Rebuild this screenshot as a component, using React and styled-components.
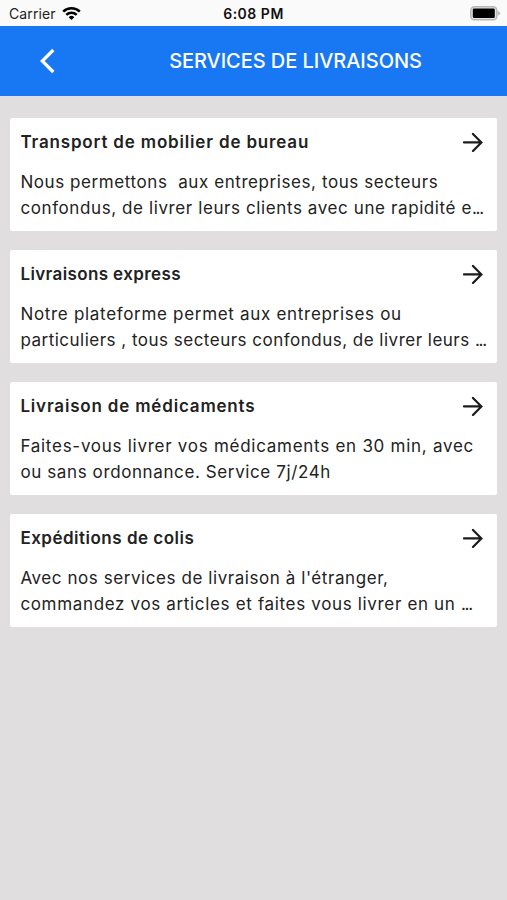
import React from 'react';
import styled, { createGlobalStyle } from 'styled-components';

const services = [
  {
    id: 1,
    title: { text: 'Transport de mobilier de bureau', spacing: 0.83 },
    lines: [
      { text: 'Nous permettons  aux entreprises, tous secteurs', spacing: 0.58 },
      { text: 'confondus, de livrer leurs clients avec une rapidité e', spacing: 0.6, cut: true },
    ],
  },
  {
    id: 2,
    title: { text: 'Livraisons express', spacing: 0.38 },
    lines: [
      { text: 'Notre plateforme permet aux entreprises ou', spacing: 0.69 },
      { text: 'particuliers , tous secteurs confondus, de livrer leurs ', spacing: 0.49, cut: true },
    ],
  },
  {
    id: 3,
    title: { text: 'Livraison de médicaments', spacing: 0.82 },
    lines: [
      { text: 'Faites-vous livrer vos médicaments en 30 min, avec', spacing: 0.73 },
      { text: 'ou sans ordonnance. Service 7j/24h', spacing: 0.61 },
    ],
  },
  {
    id: 4,
    title: { text: 'Expéditions de colis', spacing: 0.5 },
    lines: [
      { text: "Avec nos services de livraison à l'étranger,", spacing: 0.57 },
      { text: 'commandez vos articles et faites vous livrer en un ', spacing: 0.66, cut: true },
    ],
  },
];

export default function App() {
  return (
    <Screen>
      <GlobalStyle />
      <StatusBar>
        <Network>
          Carrier
          <WifiIcon />
        </Network>
        <Clock>6:08 PM</Clock>
        <Power>
          <BatteryIcon />
        </Power>
      </StatusBar>
      <Header>
        <BackButton aria-label="Retour">
          <svg width="16" height="26" viewBox="0 0 16 26" fill="none">
            <path d="M14.3 2 L3.3 13 L14.3 24" stroke="#fff" strokeWidth="3.2" />
          </svg>
        </BackButton>
        <HeaderTitle>SERVICES DE LIVRAISONS</HeaderTitle>
      </Header>
      <List>
        {services.map((service) => (
          <Card key={service.id}>
            <CardHeader>
              <CardTitle $spacing={service.title.spacing}>{service.title.text}</CardTitle>
              <ArrowIcon />
            </CardHeader>
            {service.lines.map((line) => (
              <Line key={line.text} $spacing={line.spacing}>
                {line.text}
                {line.cut && <Ellipsis>...</Ellipsis>}
              </Line>
            ))}
          </Card>
        ))}
      </List>
    </Screen>
  );
}

function WifiIcon() {
  return (
    <svg width="19" height="14" viewBox="0 0 19 14" fill="none" stroke="#000" strokeWidth="2.5">
      <path d="M1.2 4.7 A11.8 11.8 0 0 1 17.8 4.7" />
      <path d="M4.3 7.9 A7.4 7.4 0 0 1 14.7 7.9" />
      <path d="M9.5 13 L6.7 10.2 A4 4 0 0 1 12.3 10.2 Z" fill="#000" stroke="none" />
    </svg>
  );
}

function BatteryIcon() {
  return (
    <svg width="31" height="15" viewBox="0 0 31 15">
      <rect x="0.8" y="0.8" width="26" height="13" rx="3.6" fill="#e4e4e4" stroke="#b8b8b8" strokeWidth="1.5" />
      <rect x="2.8" y="2.6" width="22" height="9.4" rx="1.2" fill="#000" />
      <path d="M27.8 4.8 Q32.4 7.3 27.8 9.8 Z" fill="#b8b8b8" />
    </svg>
  );
}

function ArrowIcon() {
  return (
    <svg width="22" height="20" viewBox="0 0 22 20" fill="none" stroke="#1c1c1c" strokeWidth="2.2" strokeLinecap="round">
      <path d="M2 10.4 H19 M11 1.9 L19.4 10.4 L11 18.9" />
    </svg>
  );
}

const GlobalStyle = createGlobalStyle`
  body {
    margin: 0;
    background: #e0dedf;
    font-family: Inter, 'Liberation Sans', sans-serif;
  }
`;

const Screen = styled.div`
  min-height: 100vh;
  background: #e0dedf;
`;

const StatusBar = styled.div`
  display: grid;
  grid-template-columns: 1fr auto 1fr;
  align-items: center;
  box-sizing: border-box;
  height: 26px;
  padding: 1px 6px 0 9px;
  background: #fafafa;
  font-size: 14px;
  color: #222;
`;

const Network = styled.div`
  display: flex;
  align-items: center;
  gap: 6px;
  letter-spacing: 0.1px;
`;

const Clock = styled.span`
  margin-right: 3px;
  font-weight: 600;
  letter-spacing: 0.5px;
  color: #111;
`;

const Power = styled.div`
  display: flex;
  justify-content: flex-end;
`;

const Header = styled.header`
  display: flex;
  align-items: center;
  height: 70px;
  background: #1877f2;
`;

const BackButton = styled.button`
  display: flex;
  width: 84px;
  padding: 0 0 0 39px;
  border: 0;
  background: none;
`;

const HeaderTitle = styled.h1`
  flex: 1;
  margin: 0;
  font-size: 20px;
  font-weight: 500;
  line-height: 30px;
  letter-spacing: -0.05px;
  text-align: center;
  white-space: nowrap;
  color: #fff;
`;

const List = styled.main`
  display: flex;
  flex-direction: column;
  gap: 19px;
  padding: 22px 10px 22px 10.4px;
`;

const Card = styled.article`
  box-sizing: border-box;
  height: 113px;
  padding: 11px 11px 0 10px;
  border-radius: 2px;
  background: #fff;
  color: #222;
`;

const CardHeader = styled.div`
  display: flex;
  align-items: center;
  justify-content: space-between;
  height: 26px;
  margin-bottom: 15px;
  padding-right: 2px;
`;

const CardTitle = styled.h2`
  margin: 0;
  font-size: 17px;
  font-weight: 600;
  letter-spacing: ${(props) => props.$spacing}px;
  white-space: pre;
`;

const Line = styled.p`
  margin: 0;
  font-size: 17px;
  line-height: 25.6px;
  letter-spacing: ${(props) => props.$spacing}px;
  white-space: pre;
`;

const Ellipsis = styled.span`
  letter-spacing: -1.3px;
`;
